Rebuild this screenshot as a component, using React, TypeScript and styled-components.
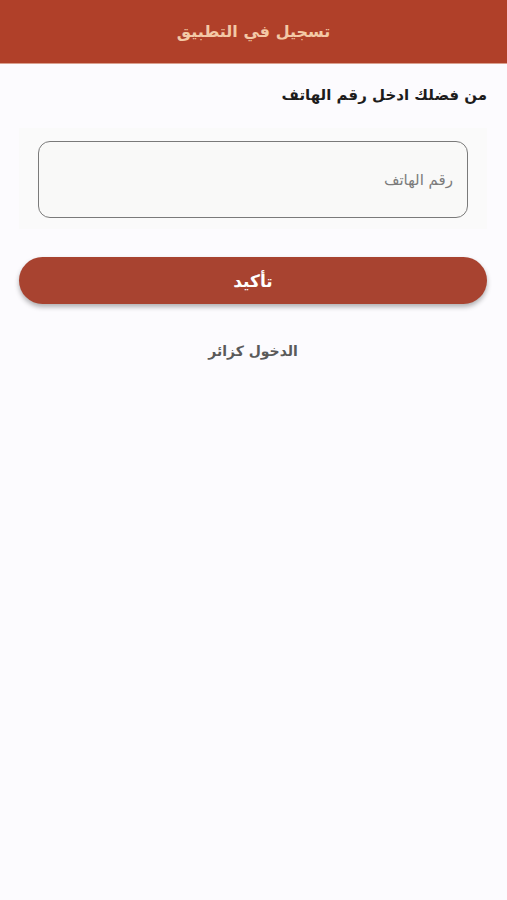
import React from "react";
import styled, { createGlobalStyle } from "styled-components";

const GlobalStyle = createGlobalStyle`
  html, body {
    margin: 0;
    padding: 0;
    background: #fcfbfe;
    font-family: "DejaVu Sans", "Noto Sans", sans-serif;
  }
`;

const Screen = styled.div`
  direction: rtl;
  min-height: 900px;
  background: #fcfbfe;
`;

const Header = styled.header`
  height: 63px;
  background: #b04029;
  display: flex;
  align-items: center;
  justify-content: center;
  border-bottom: 1px solid #d9a08f;
`;

const Title = styled.h1`
  margin: 0;
  font-size: 16px;
  font-weight: bold;
  color: #f3c9a6;
`;

const Content = styled.main`
  padding: 22px 20px 0 19px;
`;

const Prompt = styled.p`
  margin: 0;
  font-size: 15px;
  font-weight: bold;
  color: #1c1c1c;
`;

const FieldPanel = styled.div`
  margin-top: 24px;
  padding: 13px 19px 11px 19px;
  background: #fafafa;
`;

const PhoneInput = styled.input`
  box-sizing: border-box;
  width: 100%;
  height: 77px;
  border: 1.5px solid #7a7a7a;
  border-radius: 12px;
  background: #f9f9f8;
  padding: 0 14px;
  font-family: "DejaVu Sans", sans-serif;
  font-size: 15px;
  direction: rtl;
  outline: none;
  &::placeholder {
    color: #7c7c7c;
  }
`;

const ConfirmButton = styled.button`
  display: block;
  width: 100%;
  height: 47px;
  margin-top: 28px;
  border: none;
  border-radius: 24px;
  background: #a84330;
  color: #ffffff;
  font-family: "DejaVu Sans", sans-serif;
  font-size: 17px;
  font-weight: bold;
  box-shadow: 0 3px 5px rgba(0, 0, 0, 0.3);
`;

const GuestLink = styled.a`
  display: block;
  margin-top: 39px;
  text-align: center;
  font-size: 14px;
  font-weight: bold;
  color: #5a5a5a;
`;

export default function App() {
  return (
    <Screen>
      <GlobalStyle />
      <Header>
        <Title>تسجيل في التطبيق</Title>
      </Header>
      <Content>
        <Prompt>من فضلك ادخل رقم الهاتف</Prompt>
        <FieldPanel>
          <PhoneInput placeholder="رقم الهاتف" />
        </FieldPanel>
        <ConfirmButton>تأكيد</ConfirmButton>
        <GuestLink>الدخول كزائر</GuestLink>
      </Content>
    </Screen>
  );
}
